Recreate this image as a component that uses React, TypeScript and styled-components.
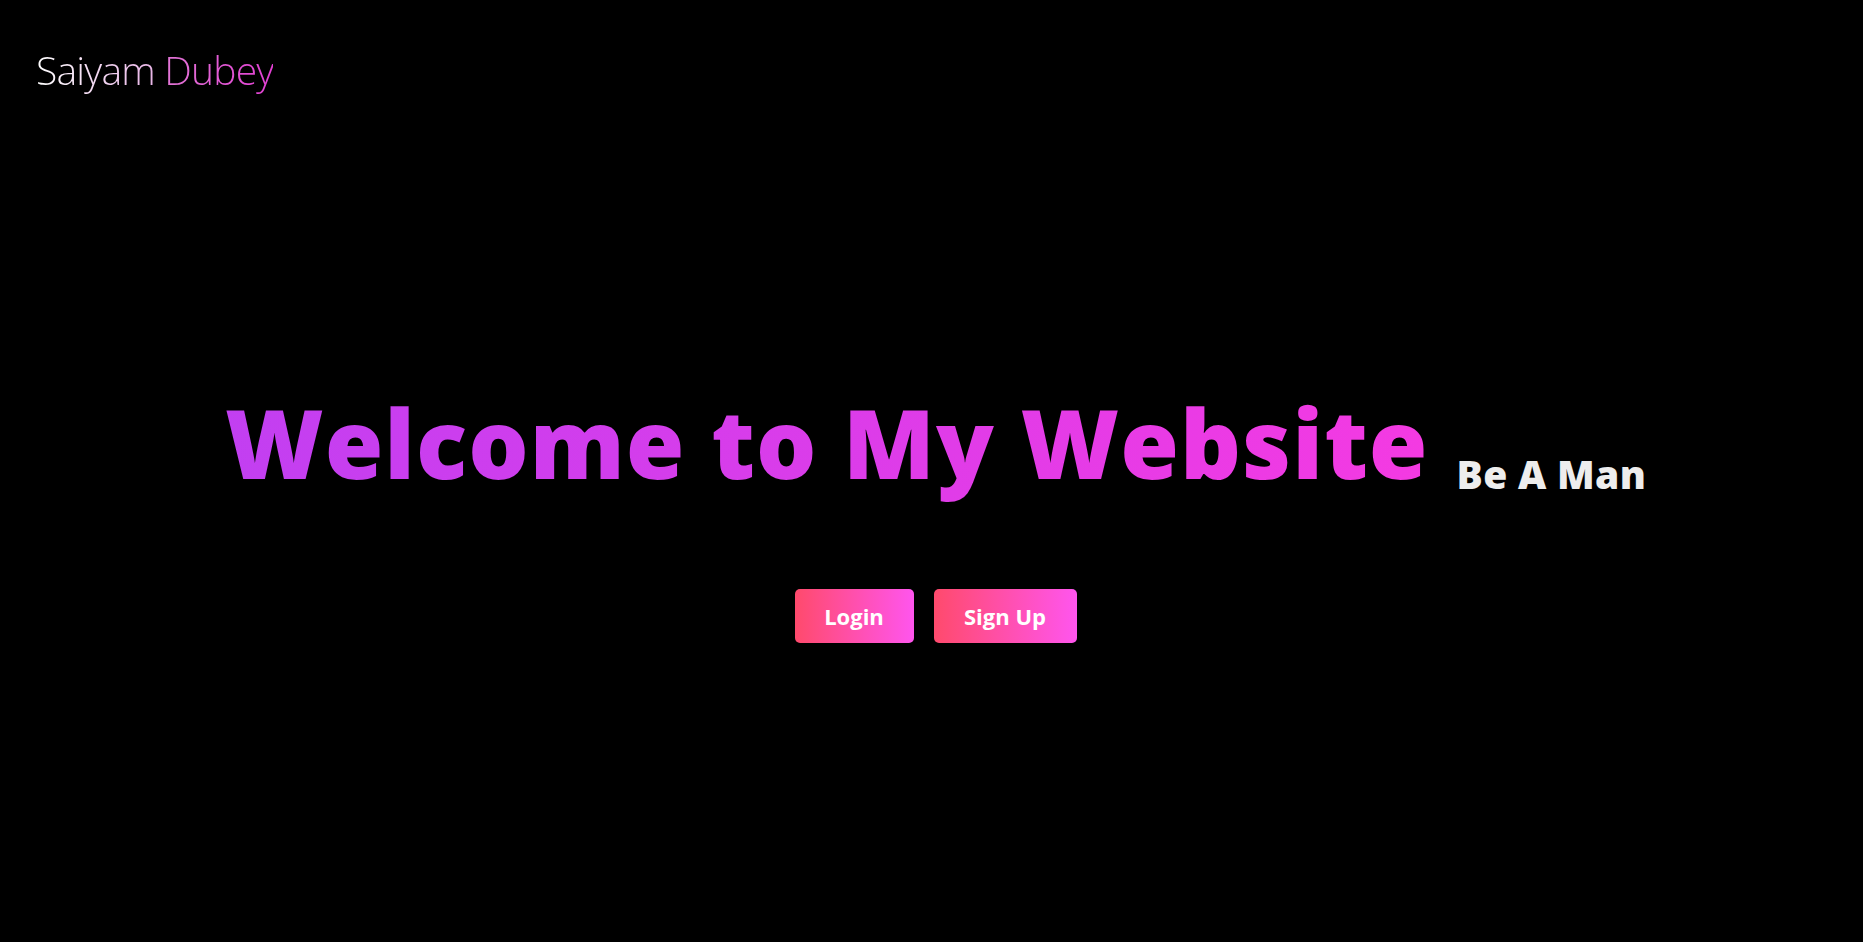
import React from "react";
import styled, { createGlobalStyle } from "styled-components";

const GlobalStyle = createGlobalStyle`
  html, body {
    margin: 0;
    padding: 0;
    background: #000;
  }
  body {
    font-family: "Open Sans", "Noto Sans", sans-serif;
    color: #fff;
  }
  * { box-sizing: border-box; }
`;

const Page = styled.div`
  min-height: 100vh;
  background: #000;
  display: flex;
  flex-direction: column;
`;

const Nav = styled.nav`
  display: flex;
  align-items: center;
  padding: 38px 36px 0;
  height: 100px;
`;

const Logo = styled.div`
  font-family: "Open Sans", sans-serif;
  font-weight: 300;
  font-size: 39px;
  line-height: 1;
  letter-spacing: -0.8px;
`;

const GradientText = styled.span<{ $from: string; $to: string }>`
  background: linear-gradient(to right, ${(p) => p.$from}, ${(p) => p.$to});
  -webkit-background-clip: text;
  background-clip: text;
  color: transparent;
`;

const Hero = styled.main`
  display: flex;
  flex-direction: column;
  align-items: center;
  padding-top: 295px;
  padding-left: 8px;
`;

const Title = styled.h1`
  margin: 0;
  text-align: center;
  line-height: 1;
  white-space: nowrap;
`;

const Headline = styled.span`
  font-family: "Open Sans", sans-serif;
  font-weight: 800;
  font-size: 95px;
  letter-spacing: 1px;
  background: linear-gradient(to right, #c23ff1, #f43ae2);
  -webkit-background-clip: text;
  background-clip: text;
  color: transparent;
`;

const Tagline = styled.span`
  font-family: "Open Sans", sans-serif;
  font-weight: 800;
  font-size: 39px;
  letter-spacing: 0.3px;
  color: #ededed;
  margin-left: 28px;
  vertical-align: -10px;
`;

const Actions = styled.div`
  display: flex;
  gap: 20px;
  margin-top: 96px;
`;

const Button = styled.button<{ $width: number }>`
  width: ${(p) => p.$width}px;
  height: 54px;
  border: none;
  border-radius: 5px;
  background: linear-gradient(to right, #ff4a6c, #ff55ee);
  color: #fff;
  font-family: "Open Sans", sans-serif;
  font-weight: 700;
  font-size: 22px;
  cursor: pointer;
  display: flex;
  align-items: center;
  justify-content: center;
  padding: 0;
`;

export default function App() {
  return (
    <Page>
      <GlobalStyle />
      <Nav>
        <Logo>
          <GradientText $from="#ffffff" $to="#e8b4e6">Saiyam</GradientText>{" "}
          <GradientText $from="#e276d6" $to="#e33fd4">Dubey</GradientText>
        </Logo>
      </Nav>
      <Hero>
        <Title>
          <Headline>Welcome to My Website</Headline>
          <Tagline>Be A Man</Tagline>
        </Title>
        <Actions>
          <Button $width={119}>Login</Button>
          <Button $width={143}>Sign Up</Button>
        </Actions>
      </Hero>
    </Page>
  );
}
